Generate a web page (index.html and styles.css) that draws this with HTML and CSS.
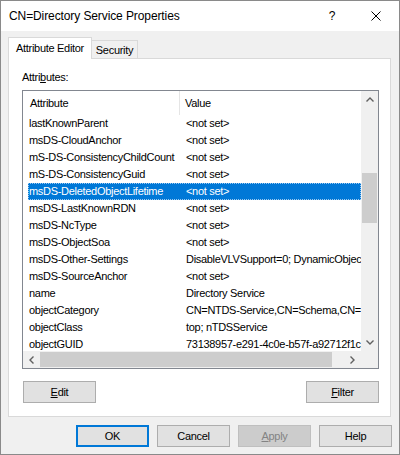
FILE: index.html
```html
<!DOCTYPE html>
<html>
<head>
<meta charset="utf-8">
<title>CN=Directory Service Properties</title>
<link rel="stylesheet" href="styles.css">
</head>
<body>
<div class="window">
  <div class="titlebar">
    <span class="title">CN=Directory Service Properties</span>
    <span class="cap cap-help">?</span>
    <span class="cap cap-close">
      <svg width="10" height="10" viewBox="0 0 10 10"><path d="M0.5 0.5 L9.5 9.5 M9.5 0.5 L0.5 9.5" stroke="#000" stroke-width="1" fill="none"/></svg>
    </span>
  </div>

  <div class="body">
    <div class="tabs">
      <div class="tab tab-active">Attribute Editor</div>
      <div class="tab tab-security">Security</div>
    </div>

    <div class="panel">
      <div class="label">Attri<u>b</u>utes:</div>

      <div class="listview">
        <div class="list-main">
          <div class="header">
            <div class="hcol hcol-name">Attribute</div>
            <div class="hcol hcol-value">Value</div>
          </div>
          <div class="rows">
            <div class="row"><span class="c1">lastKnownParent</span><span class="c2">&lt;not set&gt;</span></div>
            <div class="row"><span class="c1">msDS-CloudAnchor</span><span class="c2">&lt;not set&gt;</span></div>
            <div class="row"><span class="c1">mS-DS-ConsistencyChildCount</span><span class="c2">&lt;not set&gt;</span></div>
            <div class="row"><span class="c1">mS-DS-ConsistencyGuid</span><span class="c2">&lt;not set&gt;</span></div>
            <div class="row row-selected"><span class="c1">msDS-DeletedObjectLifetime</span><span class="c2">&lt;not set&gt;</span></div>
            <div class="row"><span class="c1">msDS-LastKnownRDN</span><span class="c2">&lt;not set&gt;</span></div>
            <div class="row"><span class="c1">msDS-NcType</span><span class="c2">&lt;not set&gt;</span></div>
            <div class="row"><span class="c1">msDS-ObjectSoa</span><span class="c2">&lt;not set&gt;</span></div>
            <div class="row"><span class="c1">msDS-Other-Settings</span><span class="c2">DisableVLVSupport=0; DynamicObjectDefaultTTL=86400</span></div>
            <div class="row"><span class="c1">msDS-SourceAnchor</span><span class="c2">&lt;not set&gt;</span></div>
            <div class="row"><span class="c1">name</span><span class="c2">Directory Service</span></div>
            <div class="row"><span class="c1">objectCategory</span><span class="c2">CN=NTDS-Service,CN=Schema,CN=Configuration</span></div>
            <div class="row"><span class="c1">objectClass</span><span class="c2">top; nTDSService</span></div>
            <div class="row"><span class="c1">objectGUID</span><span class="c2">73138957-e291-4c0e-b57f-a92712f1c3d8</span></div>
            <div class="row"><span class="c1">objectVersion</span><span class="c2">&lt;not set&gt;</span></div>
          </div>
        </div>

        <div class="vscroll">
          <div class="sb-btn">
            <svg width="8" height="5" viewBox="0 0 8 5"><path d="M0.5 4.5 L4 1 L7.5 4.5" stroke="#606060" stroke-width="1.4" fill="none"/></svg>
          </div>
          <div class="vtrack"><div class="vthumb"></div></div>
          <div class="sb-btn">
            <svg width="8" height="5" viewBox="0 0 8 5"><path d="M0.5 0.5 L4 4 L7.5 0.5" stroke="#606060" stroke-width="1.4" fill="none"/></svg>
          </div>
        </div>

        <div class="hscroll">
          <div class="sb-btn">
            <svg width="5" height="8" viewBox="0 0 5 8"><path d="M4.5 0.5 L1 4 L4.5 7.5" stroke="#606060" stroke-width="1.4" fill="none"/></svg>
          </div>
          <div class="htrack"><div class="hthumb"></div></div>
          <div class="sb-btn">
            <svg width="5" height="8" viewBox="0 0 5 8"><path d="M0.5 0.5 L4 4 L0.5 7.5" stroke="#606060" stroke-width="1.4" fill="none"/></svg>
          </div>
        </div>

        <div class="corner"></div>
      </div>

      <div class="panel-buttons">
        <button class="btn"><u>E</u>dit</button>
        <button class="btn"><u>F</u>ilter</button>
      </div>
    </div>
  </div>

  <div class="footer">
    <button class="btn btn-default">OK</button>
    <button class="btn">Cancel</button>
    <button class="btn btn-disabled"><u>A</u>pply</button>
    <button class="btn">Help</button>
  </div>
</div>
</body>
</html>
```

FILE: styles.css
```css
* {
  box-sizing: border-box;
}

html, body {
  margin: 0;
  padding: 0;
  background: #f0f0f0;
}

body {
  font-family: "Liberation Sans", Arial, sans-serif;
  font-size: 11px;
  letter-spacing: -0.3px;
  color: #000;
}

/* Dialog frame */
.window {
  width: 400px;
  height: 455px;
  border: 1px solid #8a8a8a;
  background: #f0f0f0;
  display: flex;
  flex-direction: column;
}

.titlebar {
  height: 30px;
  background: #fff;
  display: flex;
  align-items: center;
  flex-shrink: 0;
}

.title {
  flex: 1;
  padding-left: 8px;
  font-size: 12px;
  letter-spacing: -0.1px;
}

.cap {
  width: 46px;
  height: 30px;
  display: flex;
  align-items: center;
  justify-content: center;
}

.cap-help {
  font-size: 12px;
  padding-left: 4px;
}

.cap-close svg {
  display: block;
}

/* Property sheet body */
.body {
  padding: 6px 8px 0 7px;
}

.tabs {
  height: 21px;
  display: flex;
  align-items: flex-start;
  position: relative;
  z-index: 1;
}

.tab {
  border: 1px solid #d9d9d9;
  border-bottom: none;
  display: flex;
  align-items: center;
  justify-content: center;
}

.tab-active {
  width: 84px;
  height: 22px;
  background: #fff;
  padding-bottom: 1px;
}

.tab-security {
  width: 46px;
  height: 18px;
  margin-top: 3px;
  background: #f0f0f0;
  border-left: none;
}

.panel {
  width: 383px;
  height: 359px;
  background: #fff;
  border: 1px solid #d9d9d9;
  padding: 10px 11px 13px 13px;
  display: flex;
  flex-direction: column;
}

.label {
  height: 16px;
  line-height: 16px;
  margin-bottom: 5px;
}

/* List view */
.listview {
  width: 357px;
  height: 279px;
  border: 1px solid #828790;
  display: grid;
  grid-template-columns: 338px 17px;
  grid-template-rows: 260px 17px;
  background: #fff;
}

.list-main {
  overflow: hidden;
  white-space: nowrap;
}

.header {
  height: 24px;
  display: flex;
}

.hcol {
  height: 24px;
  line-height: 24px;
}

.hcol-name {
  width: 157px;
  padding-left: 7px;
  border-right: 1px solid #e5e5e5;
}

.hcol-value {
  padding-left: 5px;
}

.rows {
  padding-left: 5px;
}

.row {
  height: 17px;
  line-height: 17px;
  display: flex;
  padding-left: 1px;
}

.row .c1 {
  width: 157px;
  flex-shrink: 0;
}

.row .c2 {
  flex-shrink: 0;
}

.row-selected {
  background: #0078d7;
  color: #fff;
  outline: 1px dotted #9cc9f0;
  outline-offset: -1px;
}

/* Scroll bars */
.vscroll {
  grid-column: 2;
  grid-row: 1;
  background: #f0f0f0;
  display: flex;
  flex-direction: column;
}

.sb-btn {
  width: 17px;
  height: 17px;
  flex-shrink: 0;
  display: flex;
  align-items: center;
  justify-content: center;
}

.vtrack {
  flex: 1;
  padding-top: 65px;
}

.vthumb {
  width: 15px;
  height: 50px;
  margin-left: 1px;
  background: #cdcdcd;
}

.hscroll {
  grid-column: 1;
  grid-row: 2;
  background: #f0f0f0;
  display: flex;
}

.htrack {
  flex: 1;
  padding-top: 1px;
}

.hthumb {
  width: 292px;
  height: 15px;
  background: #cdcdcd;
}

.corner {
  grid-column: 2;
  grid-row: 2;
  background: #f0f0f0;
}

/* Buttons */
.panel-buttons {
  margin-top: 12px;
  display: flex;
  justify-content: space-between;
}

.btn {
  width: 73px;
  height: 22px;
  padding: 0;
  margin: 0;
  background: #e1e1e1;
  border: 1px solid #adadad;
  font-family: inherit;
  font-size: 11px;
  letter-spacing: -0.3px;
  color: #000;
}

.panel-buttons .btn:first-child {
  margin-left: 1px;
}

.btn-default {
  border: 2px solid #0078d7;
}

.btn-disabled {
  background: #cccccc;
  border-color: #bfbfbf;
  color: #838383;
}

.footer {
  margin-top: 8px;
  padding-right: 7px;
  display: flex;
  justify-content: flex-end;
  gap: 8px;
}
```
